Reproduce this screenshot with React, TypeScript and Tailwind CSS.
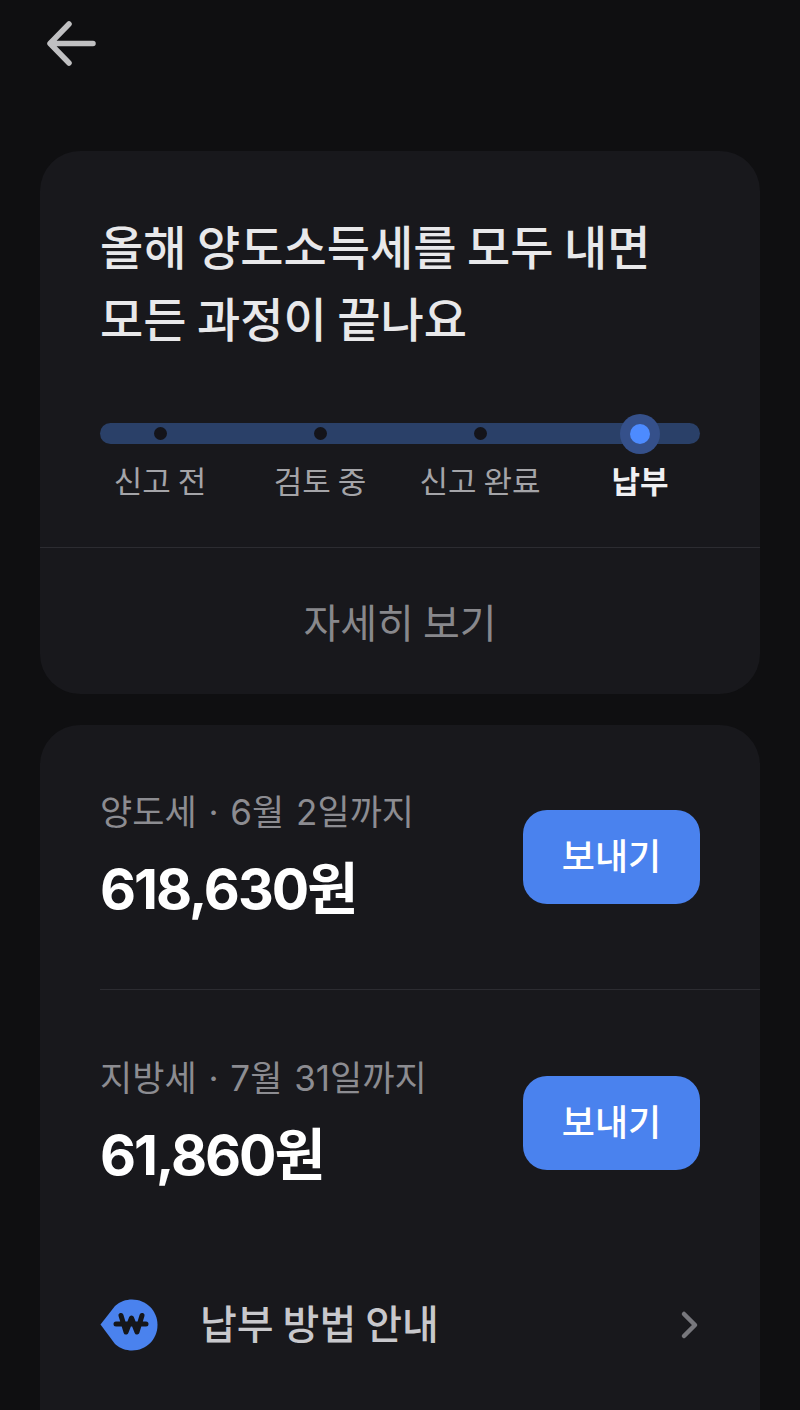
const font = { fontFamily: '"Noto Sans CJK KR", Inter, sans-serif' }
const latinFirst = { fontFamily: 'Inter, "Noto Sans CJK KR", sans-serif' }

const steps = [
  { label: '신고 전' },
  { label: '검토 중' },
  { label: '신고 완료' },
  { label: '납부', active: true },
]

function BackArrow() {
  return (
    <svg width="52" height="48" viewBox="0 0 52 48" fill="none" className="text-[#c0c0c2]">
      <path d="M24 3 L5 22.5 L24 42 M6 22.5 H48" stroke="currentColor" strokeWidth="5.5" strokeLinecap="round" strokeLinejoin="round" />
    </svg>
  )
}

function WonIcon() {
  return (
    <svg width="58" height="52" viewBox="0 0 58 52" fill="none">
      <path d="M0.5 25.500 L15 7 C20 2.500 26 0.500 32 0.500 C46 0.500 57.500 11.500 57.500 26 C57.500 40.500 46 51.500 32 51.500 C26 51.500 20 49.500 15 45 Z" fill="#4a82ee" />
      <path d="M21 16.500 L26 33 L31.500 19 L37 33 L42 16.500 M16 25 H46" stroke="#15161a" strokeWidth="5" strokeLinecap="round" strokeLinejoin="round" />
    </svg>
  )
}

function TaxRow({ title, amount }: { title: string; amount: string }) {
  return (
    <div className="flex items-start justify-between px-[60px]">
      <div style={latinFirst}>
        <div className="text-[35px] leading-[44px] text-[#8c8c91] [word-spacing:2px]">{title}</div>
        <div className="mt-[23px] text-[55.5px] leading-[64px] font-bold tracking-[-2px] text-white">{amount}</div>
      </div>
      <button className="mt-[20px] flex h-[94px] w-[177px] items-center justify-center rounded-[24px] bg-[#4a82ee] pb-[6px] text-[36px] font-medium text-white">
        보내기
      </button>
    </div>
  )
}

export default function App() {
  return (
    <div className="h-[1410px] w-[800px] overflow-hidden bg-[#0f0f11]" style={font}>
      <div className="flex h-[151px] items-start pl-[45px] pt-[21px]">
        <BackArrow />
      </div>

      <div className="mx-[40px] rounded-[40px] bg-[#18181c]">
        <div className="px-[60px] pt-[58px]">
          <h1 className="text-[47px] leading-[72px] font-medium text-[#e8e8ea]">
            올해 양도소득세를 모두 내면
            <br />
            모든 과정이 끝나요
          </h1>
        </div>

        <div className="px-[60px] pt-[70px]">
          <div className="h-[21px] rounded-full bg-[#2a4068]">
            <div className="-mx-[20px] grid grid-cols-4 grid-rows-[21px] items-center">
              {steps.map((s) => (
                <div key={s.label} className="flex h-[21px] items-center justify-center">
                  {s.active ? (
                    <div className="flex h-[40px] w-[40px] shrink-0 items-center justify-center rounded-full bg-[#35508a]">
                      <div className="h-[20px] w-[20px] rounded-full bg-[#4d8bff]" />
                    </div>
                  ) : (
                    <div className="h-[13px] w-[13px] rounded-full bg-[#14141a]" />
                  )}
                </div>
              ))}
            </div>
          </div>
          <div className="-mx-[20px] mt-[16px] grid grid-cols-4">
            {steps.map((s) => (
              <div
                key={s.label}
                className={`text-center text-[31px] leading-[40px] ${s.active ? 'font-bold text-[#f0f0f2]' : 'text-[#a4a4a8]'}`}
              >
                {s.label}
              </div>
            ))}
          </div>
        </div>

        <div className="mt-[47px] border-t border-[#2c2c31]" />
        <div className="flex h-[146px] items-center justify-center text-[40px] text-[#88888c]">자세히 보기</div>
      </div>

      <div className="mx-[40px] mt-[31px] h-[760px] rounded-[40px] bg-[#18181c]">
        <div className="pt-[65px]">
          <TaxRow title="양도세 · 6월 2일까지" amount="618,630원" />
        </div>
        <div className="mt-[68px] ml-[60px] border-t border-[#2c2c31]" />
        <div className="pt-[66px]">
          <TaxRow title="지방세 · 7월 31일까지" amount="61,860원" />
        </div>
        <div className="mt-[105px] flex items-center px-[60px]">
          <WonIcon />
          <span className="ml-[42px] flex-1 pb-[5px] text-[40px] font-medium text-[#c8c8cc]">납부 방법 안내</span>
          <svg width="20" height="32" viewBox="0 0 20 32" fill="none">
            <path d="M4 5 L15 16 L4 27" stroke="#77777c" strokeWidth="4.500" strokeLinecap="round" strokeLinejoin="round" />
          </svg>
        </div>
      </div>
    </div>
  )
}
